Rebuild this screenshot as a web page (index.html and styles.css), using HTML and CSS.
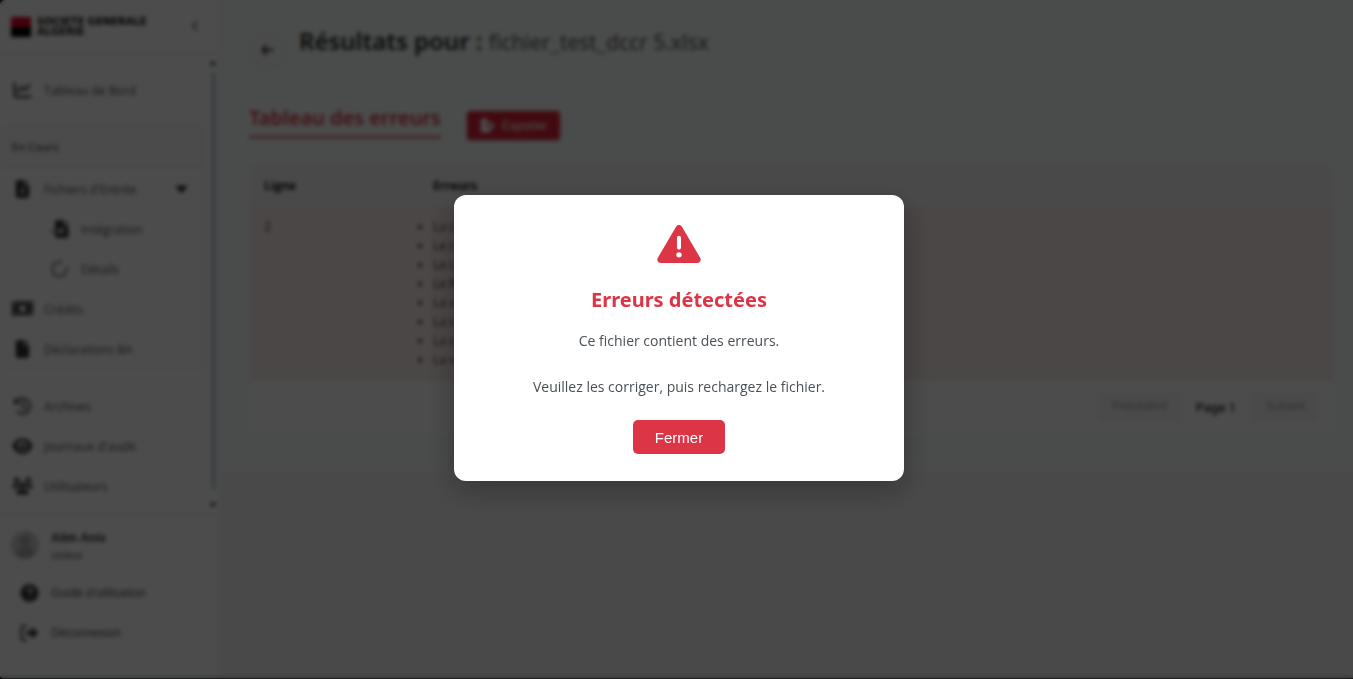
FILE: index.html
```html
<!DOCTYPE html>
<html lang="fr">
<head>
<meta charset="utf-8">
<title>Résultats</title>
<link rel="stylesheet" href="styles.css">
</head>
<body>
<div class="app">
  <aside class="sidebar">
    <header class="brand">
      <span class="brand-mark"></span>
      <span class="brand-name">SOCIETE GENERALE<br>ALGERIE</span>
      <button class="collapse" aria-label="Réduire"><svg viewBox="0 0 10 16" width="8" height="12"><path d="M8 2 2 8l6 6" fill="none" stroke="currentColor" stroke-width="2"/></svg></button>
    </header>
    <div class="nav-area">
      <nav class="nav">
        <a class="item" href="#"><svg class="icon" viewBox="0 0 512 512"><path d="M64 64c0-17.700-14.300-32-32-32S0 46.300 0 64V400c0 44.200 35.800 80 80 80H480c17.700 0 32-14.300 32-32s-14.300-32-32-32H80c-8.800 0-16-7.200-16-16V64zm406.600 86.600c12.500-12.500 12.500-32.800 0-45.300s-32.800-12.500-45.300 0L320 210.700l-57.400-57.400c-12.500-12.500-32.800-12.500-45.300 0l-112 112c-12.500 12.500-12.500 32.800 0 45.300s32.800 12.500 45.300 0L240 221.300l57.400 57.400c12.500 12.500 32.800 12.500 45.300 0l128-128z"/></svg>Tableau de Bord</a>
        <section class="group">
          <h2 class="group-title">En Cours</h2>
          <a class="item" href="#"><svg class="icon" viewBox="0 0 512 512"><path fill-rule="evenodd" d="M64 64C64 29 93 0 128 0H288V128c0 18 14 32 32 32H448V448c0 35-29 64-64 64H128c-35 0-64-29-64-64zm384 64H320V0zM232 230v90h-50l74 90 74-90h-50v-90z"/></svg>Fichiers d'Entrée<svg class="caret" viewBox="0 0 14 9"><path d="M1 1h12L7 8z" stroke="currentColor" stroke-linejoin="round"/></svg></a>
          <a class="item sub" href="#"><svg class="icon" viewBox="0 0 512 512"><path fill-rule="evenodd" d="M128 64c0-35 29-64 64-64H352V128c0 18 14 32 32 32H512V448c0 35-29 64-64 64H192c-35 0-64-29-64-64V336h174l-39 39 34 34 97-97-97-97-34 34 39 39H128zm384 64H384V0zM0 288h128v48H0z"/></svg>Intégration</a>
          <a class="item sub" href="#"><svg class="icon" viewBox="0 0 512 512"><circle cx="256" cy="48" r="44"/><circle cx="256" cy="464" r="44"/><circle cx="48" cy="256" r="44"/><circle cx="464" cy="256" r="44"/><circle cx="109" cy="109" r="44"/><circle cx="109" cy="403" r="44"/><circle cx="403" cy="403" r="44"/></svg>Détails</a>
          <a class="item" href="#"><svg class="icon wide" viewBox="0 0 576 448"><path fill-rule="evenodd" d="M0 60Q0 20 40 20h400q50 0 80-18 56-16 56 30v330q0 36-40 36H140q-50 0-80 28-60 30-60-20zM288 110c-50 0-90 46-90 104s40 104 90 104 90-46 90-104-40-104-90-104zM60 80v70c40 0 70-30 70-70zM60 345h70c0-40-30-70-70-70zM516 75h-70c0 40 30 70 70 70zM516 340v-70c-40 0-70 30-70 70z"/></svg>Crédits</a>
          <a class="item" href="#"><svg class="icon" viewBox="0 0 512 512"><path d="M64 64C64 29 93 0 128 0H288V128c0 18 14 32 32 32H448V448c0 35-29 64-64 64H128c-35 0-64-29-64-64zm384 64H320V0z"/></svg>Déclarations BA</a>
        </section>
        <a class="item" href="#"><svg class="icon" viewBox="0 0 512 512"><path d="M80 130A215 215 0 1 1 110 415M256 140v120l85 60" fill="none" stroke="currentColor" stroke-width="56" stroke-linecap="round"/><path d="M10 30v170h170z"/></svg>Archives</a>
        <a class="item" href="#"><svg class="icon wide" viewBox="0 0 576 512"><path fill-rule="evenodd" d="M288 32C160 32 60 110 5 240q-5 16 0 32C60 402 160 480 288 480s228-78 283-208q5-16 0-32C516 110 416 32 288 32zm0 80a144 144 0 1 1 0 288 144 144 0 0 1 0-288zm0 64c0 35-29 64-64 64q-12 0-22-4a88 88 0 1 0 86-60z"/></svg>Journaux d'audit</a>
        <a class="item" href="#"><svg class="icon wide" viewBox="0 0 640 512"><circle cx="144" cy="80" r="80"/><circle cx="496" cy="80" r="80"/><circle cx="320" cy="224" r="92"/><path d="M0 299c0-59 48-107 107-107h42q26 0 48 10-15 75 43 118H21q-21 0-21-21zM640 299c0-59-48-107-107-107h-42q-26 0-48 10 15 75-43 118h219q21 0 21-21zM128 485c0-73 60-133 133-133h118c73 0 133 60 133 133q0 27-27 27H155q-27 0-27-27z"/></svg>Utilisateurs</a>
      </nav>
      <div class="scroll">
        <svg viewBox="0 0 8 6"><path d="M0 5l4-4 4 4z"/></svg>
        <span class="thumb"></span>
        <svg viewBox="0 0 8 6"><path d="M0 1l4 4 4-4z"/></svg>
      </div>
    </div>
    <footer class="account">
      <div class="user">
        <svg class="avatar" viewBox="0 0 28 28"><circle class="avatar-bg" cx="14" cy="14" r="14"/><circle cx="14" cy="10" r="5"/><path d="M5 24c1-11 17-11 18 0-5 5-13 5-18 0z"/></svg>
        <div><div class="user-name">Alim Anis</div><div class="user-role">visiteur</div></div>
      </div>
      <a class="item foot" href="#"><svg class="icon" viewBox="0 0 18 18"><circle cx="9" cy="9" r="9"/><path d="M6.500 7c0-4 5.500-3 5.500-.5C12 8.500 9 8.500 9 11M9 13v1.500" fill="none" stroke="#eee" stroke-width="1.800"/></svg>Guide d'utilisation</a>
      <a class="item foot" href="#"><svg class="icon" viewBox="0 0 18 18"><path d="M6 2H3Q1 2 1 4v10q0 2 2 2h3" fill="none" stroke="currentColor" stroke-width="2"/><path d="M6 7h5V3l7 6-7 6v-4H6z"/></svg>Déconnexion</a>
    </footer>
  </aside>
  <main class="main">
    <div class="page">
      <header class="page-head">
        <button class="back" aria-label="Retour"><svg viewBox="0 0 14 12" width="13" height="12"><path d="M13 6H2M6 1 1.500 6 6 11" fill="none" stroke="currentColor" stroke-width="2"/></svg></button>
        <h1 class="title">Résultats pour : <span class="file">fichier_test_dccr 5.xlsx</span></h1>
      </header>
      <div class="section-head">
        <h2 class="section-title">Tableau des erreurs</h2>
        <button class="export"><svg viewBox="0 0 18 16" width="16" height="15"><path d="M1 2q0-2 2-2h5v4h4v3H7v3h5v4q0 2-2 2H3q-2 0-2-2zM12 4l5 4.500-5 4.500z"/></svg>Exporter</button>
      </div>
      <div class="card">
        <table class="errors">
          <thead><tr><th class="col-line">Ligne</th><th>Erreurs</th></tr></thead>
          <tbody><tr><td>2</td><td><ul class="list"><li>La s</li><li>Le c</li><li>Le c</li><li>Le R</li><li>La v</li><li>La v</li><li>La v</li><li>La v</li></ul></td></tr></tbody>
        </table>
        <div class="pager">
          <button class="page-btn" disabled>Précédent</button>
          <span class="page-no">Page 1</span>
          <button class="page-btn" disabled>Suivant</button>
        </div>
      </div>
    </div>
  </main>
</div>
<div class="overlay">
  <div class="modal" role="dialog" aria-labelledby="modal-title">
    <svg class="warn" viewBox="0 32 512 448"><path d="M256 32c14.200 0 27.300 7.500 34.500 19.800l216 368c7.300 12.400 7.300 27.700 .2 40.100S486.300 480 472 480H40c-14.300 0-27.600-7.700-34.700-20.100s-7-27.800 .2-40.100l216-368C228.700 39.500 241.800 32 256 32zm0 128c-13.300 0-24 10.700-24 24V296c0 13.300 10.700 24 24 24s24-10.700 24-24V184c0-13.300-10.700-24-24-24zm32 224a32 32 0 1 0-64 0 32 32 0 1 0 64 0z"/></svg>
    <h2 class="modal-title" id="modal-title">Erreurs détectées</h2>
    <p class="modal-text">Ce fichier contient des erreurs.<br><br>Veuillez les corriger, puis rechargez le fichier.</p>
    <button class="close">Fermer</button>
  </div>
</div>
</body>
</html>
```
FILE: styles.css
```css
* { box-sizing: border-box; }
body {
  margin: 0;
  background: #000418;
  font-family: "Open Sans", "Noto Sans", sans-serif;
  font-size: 12px;
  color: #333;
}
h1, h2, p { margin: 0; }
button { font-family: "Liberation Sans", Arial, sans-serif; border: 0; }
svg { fill: currentColor; flex: none; }

.app {
  display: flex;
  height: calc(100vh - 1px);
  border-radius: 6px 0 0 4px;
  overflow: hidden;
  background: #f5f5f5;
}

/* Sidebar */
.sidebar {
  display: flex;
  flex-direction: column;
  width: 221px;
  flex: none;
  background: #fff;
  border-right: 1px solid #f0f0f0;
}
.brand {
  display: flex;
  align-items: center;
  gap: 6px;
  height: 55px;
  padding: 0 21px 0 11px;
  border-bottom: 1px solid #e4e4e4;
}
.brand-mark {
  width: 20px;
  height: 20px;
  background: linear-gradient(#e60028 50%, #000 50%);
}
.brand-name {
  flex: 1;
  font: bold 10px/10px "DejaVu Sans", sans-serif;
  color: #111;
  white-space: nowrap;
}
.collapse { background: none; padding: 0; color: #555; }
.nav-area { display: flex; flex: 1; min-height: 0; }
.nav { flex: 1; padding-top: 15px; }
.item {
  display: flex;
  align-items: center;
  gap: 12px;
  height: 40px;
  padding-left: 13px;
  color: #555;
  text-decoration: none;
}
.icon { width: 19px; height: 18px; color: #333; }
.icon.wide { width: 21px; margin: 0 -1px; }
.sub { padding-left: 50px; }
.group {
  margin: 16px 2px 16px 0;
  border: 1px solid #eee;
  border-left: 0;
  border-radius: 4px;
}
.group-title {
  height: 42px;
  padding-left: 12px;
  background: #fafafa;
  border-bottom: 1px solid #eee;
  font-size: 11px;
  line-height: 40px;
  font-weight: 600;
  color: #555;
}
.caret { width: 13px; height: 9px; margin-left: 26px; color: #222; }
.scroll {
  display: flex;
  flex-direction: column;
  align-items: center;
  gap: 6px;
  width: 14px;
  padding: 5px 0;
  color: #333;
}
.scroll svg { width: 8px; height: 6px; }
.thumb { flex: 1; width: 5px; margin-bottom: 7px; background: #c4d6e2; }
.account {
  height: 165px;
  padding-top: 15px;
  border-top: 1px solid #e4e4e4;
  font-family: "Liberation Sans", Arial, sans-serif;
}
.user { display: flex; gap: 12px; padding: 0 11px; height: 44px; }
.avatar { width: 28px; height: 28px; margin-top: 2px; color: #aaa; }
.avatar-bg { fill: #ccc; }
.user-name { font-size: 12px; line-height: 18px; font-weight: 700; color: #333; }
.user-role { font-size: 10px; line-height: 18px; color: #555; }
.foot { padding-left: 20px; font-size: 12px; }

/* Results page */
.main { flex: 1; min-width: 0; }
.page { height: 472px; padding: 24px 19px 0 28px; background: #f8fffb; }
.page-head { display: flex; gap: 14px; height: 80px; }
.back {
  width: 36px;
  height: 36px;
  margin-top: 9px;
  border: 1px solid #e6e6e6;
  border-radius: 50%;
  background: #f8faf9;
  color: #223;
}
.title, .section-title, .modal-title { font-family: "Noto Sans", "Open Sans", sans-serif; }
.title { font-size: 24px; line-height: 34px; font-weight: 600; color: #222; }
.file { font-size: 21px; font-weight: 400; color: #555; }
.section-head { display: flex; align-items: flex-start; gap: 26px; height: 60px; }
.section-title {
  height: 34px;
  border-bottom: 2px solid #dc3545;
  font-size: 20px;
  line-height: 27px;
  font-weight: 600;
  color: #dc3545;
}
.export {
  display: flex;
  align-items: center;
  gap: 6px;
  height: 29px;
  margin-top: 7px;
  padding: 0 13px;
  border-radius: 4px;
  background: #dc2338;
  color: #fff;
  font-size: 12px;
  box-shadow: 0 1px 3px #0004;
}
.card { background: #fff; border: 1px solid #f4f4f4; }
.errors { width: 100%; border-collapse: collapse; table-layout: fixed; }
.errors th, .errors td { padding: 0 14px; text-align: left; vertical-align: top; }
.errors th { height: 41px; background: #f8f6f6; line-height: 41px; font-weight: 700; color: #111; }
.errors td { padding-top: 11px; padding-bottom: 12px; background: #ffeded; line-height: 19px; }
.col-line { width: 169px; }
.list { margin: 0; padding: 0; }
.pager { display: flex; justify-content: flex-end; gap: 16px; padding: 11px 15px 9px; }
.page-btn { height: 30px; padding: 0 13px 3px; border-radius: 4px; background: #f8f8f8; color: #aaa; font-size: 12px; }
.page-no { line-height: 32px; font-family: Roboto, sans-serif; font-size: 13px; font-weight: 500; }

/* Modal */
.overlay {
  position: fixed;
  inset: 0;
  display: flex;
  align-items: center;
  justify-content: center;
  padding: 0 0 3px 5px;
  background: rgba(0, 0, 0, .7);
  backdrop-filter: blur(2px);
}
.modal {
  display: flex;
  flex-direction: column;
  align-items: center;
  width: 450px;
  max-width: 90%;
  padding: 30px 30px 27px;
  border-radius: 12px;
  background: #fff;
  box-shadow: 0 8px 32px rgba(0, 0, 0, .3);
  text-align: center;
}
.warn { width: 44px; height: 38px; color: #dc3545; }
.modal-title { margin-top: 22px; font-size: 20px; line-height: 30px; color: #dc3545; }
.modal-text { margin: 14px 0 22px; font-size: 14px; line-height: 23px; color: #495057; }
.close {
  height: 34px;
  padding: 0 22px;
  border-radius: 5px;
  background: #dc3545;
  color: #fff;
  font-size: 15px;
}
```
